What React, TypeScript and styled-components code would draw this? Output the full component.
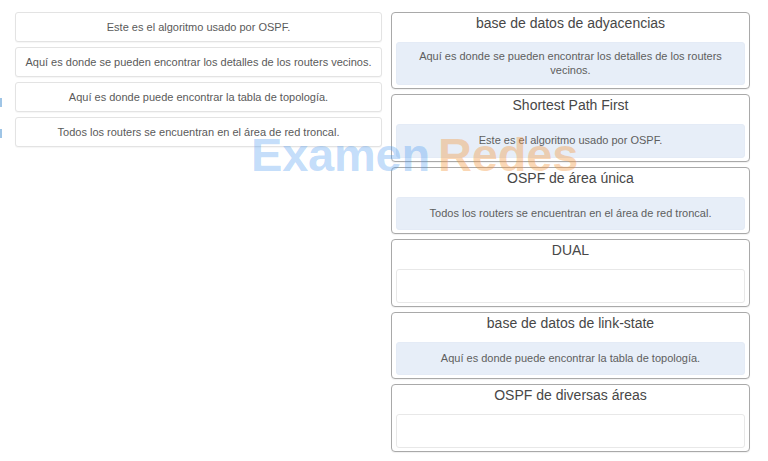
import React from 'react';
import styled, { createGlobalStyle } from 'styled-components';

const GlobalStyle = createGlobalStyle`
    html, body {
        margin: 0;
        padding: 0;
        background: #ffffff;
    }
    body {
        font-family: "Liberation Sans", Arial, sans-serif;
    }
`;

const Page = styled.div`
    position: relative;
    width: 768px;
    height: 461px;
    display: flex;
    align-items: flex-start;
    padding-top: 12px;
    box-sizing: border-box;
    overflow: hidden;
`;

const EdgeMarks = styled.div`
    width: 3px;
    display: flex;
    flex-direction: column;
    gap: 22px;
    padding-top: 86px;
`;

const EdgeMark = styled.div`
    width: 2px;
    height: 9px;
    background: rgba(80, 150, 210, 0.55);
`;

const Choices = styled.div`
    margin-left: 12px;
    width: 367px;
    display: flex;
    flex-direction: column;
    gap: 5px;
`;

const Choice = styled.div`
    height: 30px;
    box-sizing: border-box;
    border: 1px solid #e3e3e3;
    border-radius: 3px;
    box-shadow: 0 1px 1px rgba(0, 0, 0, 0.04);
    background: #fff;
    display: flex;
    align-items: center;
    justify-content: center;
    font-size: 11px;
    color: #5a5a5a;
`;

const Targets = styled.div`
    margin-left: 9px;
    width: 359px;
    display: flex;
    flex-direction: column;
    gap: 5px;
`;

const Target = styled.div`
    border: 1px solid #a9a9a9;
    border-radius: 4px;
    background: #fff;
    box-shadow: 0 1px 1px rgba(0, 0, 0, 0.06);
    display: flex;
    flex-direction: column;
`;

const TargetTitle = styled.div`
    height: 29px;
    line-height: 21px;
    text-align: center;
    font-size: 14px;
    color: #474747;
`;

const DropZone = styled.div<{ $filled: boolean }>`
    margin: 0 4px 3px;
    min-height: 33.5px;
    box-sizing: border-box;
    padding: 7px 10px;
    border-radius: 3px;
    border: 1px solid ${p => (p.$filled ? '#e4ebf6' : '#e8e8e8')};
    background: ${p => (p.$filled ? '#e7eef8' : '#ffffff')};
    display: flex;
    align-items: center;
    justify-content: center;
    text-align: center;
    font-size: 11px;
    line-height: 13.5px;
    color: #5e5e5e;
`;

const Watermark = styled.div`
    position: absolute;
    left: 251px;
    top: 127px;
    display: flex;
    gap: 8px;
    font-size: 47px;
    font-weight: bold;
    letter-spacing: -0.2px;
    pointer-events: none;
`;

const WatermarkPart = styled.span<{ $tone: 'blue' | 'orange' }>`
    color: ${p => (p.$tone === 'blue' ? 'rgba(70, 150, 240, 0.33)' : 'rgba(244, 150, 60, 0.38)')};
`;

const choices = [
    'Este es el algoritmo usado por OSPF.',
    'Aquí es donde se pueden encontrar los detalles de los routers vecinos.',
    'Aquí es donde puede encontrar la tabla de topología.',
    'Todos los routers se encuentran en el área de red troncal.',
];

const targets: { title: string; answer: string | null }[] = [
    { title: 'base de datos de adyacencias', answer: 'Aquí es donde se pueden encontrar los detalles de los routers vecinos.' },
    { title: 'Shortest Path First', answer: 'Este es el algoritmo usado por OSPF.' },
    { title: 'OSPF de área única', answer: 'Todos los routers se encuentran en el área de red troncal.' },
    { title: 'DUAL', answer: null },
    { title: 'base de datos de link-state', answer: 'Aquí es donde puede encontrar la tabla de topología.' },
    { title: 'OSPF de diversas áreas', answer: null },
];

const App = () => {
    return (
        <>
            <GlobalStyle />
            <Page>
                <EdgeMarks>
                    <EdgeMark />
                    <EdgeMark />
                </EdgeMarks>
                <Choices>
                    {choices.map(c => (
                        <Choice key={c}>{c}</Choice>
                    ))}
                </Choices>
                <Targets>
                    {targets.map(t => (
                        <Target key={t.title}>
                            <TargetTitle>{t.title}</TargetTitle>
                            <DropZone $filled={!!t.answer}>{t.answer}</DropZone>
                        </Target>
                    ))}
                </Targets>
                <Watermark>
                    <WatermarkPart $tone="blue">Examen</WatermarkPart>
                    <WatermarkPart $tone="orange">Redes</WatermarkPart>
                </Watermark>
            </Page>
        </>
    );
};

export default App;
